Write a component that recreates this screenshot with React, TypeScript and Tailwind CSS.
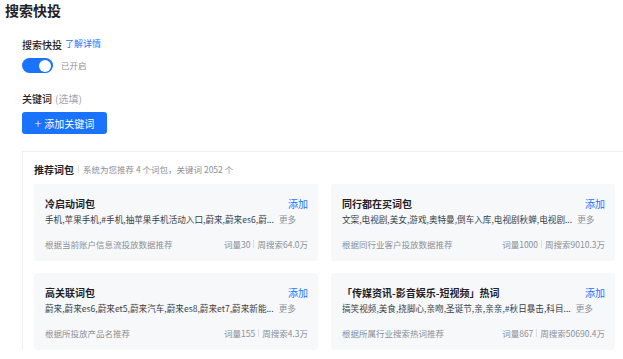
// 搜索快投 — 推荐词包面板

const packs = [
  {
    title: '冷启动词包',
    words: '手机,苹果手机,#手机,抽苹果手机活动入口,蔚来,蔚来es6,蔚...',
    source: '根据当前账户信息流投放数据推荐',
    count: '词量30',
    search: '周搜索64.0万',
  },
  {
    title: '同行都在买词包',
    words: '文案,电视剧,美女,游戏,奥特曼,倒车入库,电视剧秋蝉,电视剧...',
    source: '根据同行业客户投放数据推荐',
    count: '词量1000',
    search: '周搜索9010.3万',
  },
  {
    title: '高关联词包',
    words: '蔚来,蔚来es6,蔚来et5,蔚来汽车,蔚来es8,蔚来et7,蔚来新能...',
    source: '根据所投放产品名推荐',
    count: '词量155',
    search: '周搜索4.3万',
  },
  {
    title: '「传媒资讯-影音娱乐-短视频」热词',
    words: '搞笑视频,美食,挠脚心,亲吻,圣诞节,亲,亲亲,#秋日暴击,科目...',
    source: '根据所属行业搜索热词推荐',
    count: '词量867',
    search: '周搜索50690.4万',
  },
]

type Pack = (typeof packs)[number]

function PackCard({ p }: { p: Pack }) {
  return (
    <div className="h-[77px] rounded-[3px] bg-[#f7f8fa] pl-[11px] pr-[10px] pt-[12px]">
      <div className="flex h-[14px] items-center justify-between">
        <span className="text-[10px] font-semibold text-[#1f2329]">{p.title}</span>
        <span className="text-[10px] text-[#1a73ff]">添加</span>
      </div>
      <div className="mt-[2px] flex h-[14px] items-center text-[8.6px] text-[#3a3f47]">
        <span>{p.words}</span>
        <span className="ml-[5px] text-[#8a9099]">更多</span>
      </div>
      <div className="mt-[11px] flex h-[14px] items-center justify-between text-[8.5px] text-[#8a9099]">
        <span>{p.source}</span>
        <span className="flex items-center">
          {p.count}
          <span className="mx-[3px] h-[8px] w-px bg-[#dcdfe4]" />
          {p.search}
        </span>
      </div>
    </div>
  )
}

export default function App() {
  return (
    <div
      className="h-[359px] w-[623px] overflow-hidden bg-white"
      style={{ fontFamily: '"Noto Sans CJK SC", "Noto Sans", sans-serif' }}
    >
      <div className="flex h-[20px] items-center pl-[5px] text-[14px] font-semibold text-[#1f2329]">
        搜索快投
      </div>

      <div className="pl-[22px]">
        <div className="mt-[17px] flex h-[14px] items-center">
          <span className="text-[10px] font-medium text-[#1f2329]">搜索快投</span>
          <span className="ml-[3px] text-[9px] text-[#1a73ff]">了解详情</span>
        </div>

        <div className="mt-[7px] flex items-center">
          <div className="flex h-[15px] w-[31px] items-center justify-end rounded-full bg-[#1a73ff] pr-[2px]">
            <div className="h-[12px] w-[12px] rounded-full bg-white" />
          </div>
          <span className="ml-[8px] text-[8.5px] text-[#8a9099]">已开启</span>
        </div>

        <div className="mt-[18px] flex h-[14px] items-center text-[10px]">
          <span className="font-medium text-[#1f2329]">关键词</span>
          <span className="ml-[3px] text-[#a0a5ad]">(选填)</span>
        </div>

        <button className="mt-[7px] flex h-[22px] w-[85px] items-center justify-center rounded-[3px] bg-[#1a73ff] text-[10px] text-white">
          <span className="mr-[3px] text-[12px] leading-none font-light">+</span>
          添加关键词
        </button>
      </div>

      <div className="ml-[22px] mt-[17px] border-l border-t border-[#eef0f3] pl-[11px] pr-[8px] pt-[10px]">
        <div className="flex h-[14px] items-center">
          <span className="text-[10px] font-semibold text-[#1f2329]">推荐词包</span>
          <span className="mx-[4px] h-[8px] w-px bg-[#dcdfe4]" />
          <span className="text-[8.5px] text-[#8a9099]">系统为您推荐 4 个词包，关键词 2052 个</span>
        </div>

        <div className="mt-[8px] grid grid-cols-2 gap-x-[13px] gap-y-[12px]">
          {packs.map((p) => (
            <PackCard key={p.title} p={p} />
          ))}
        </div>
      </div>
    </div>
  )
}
